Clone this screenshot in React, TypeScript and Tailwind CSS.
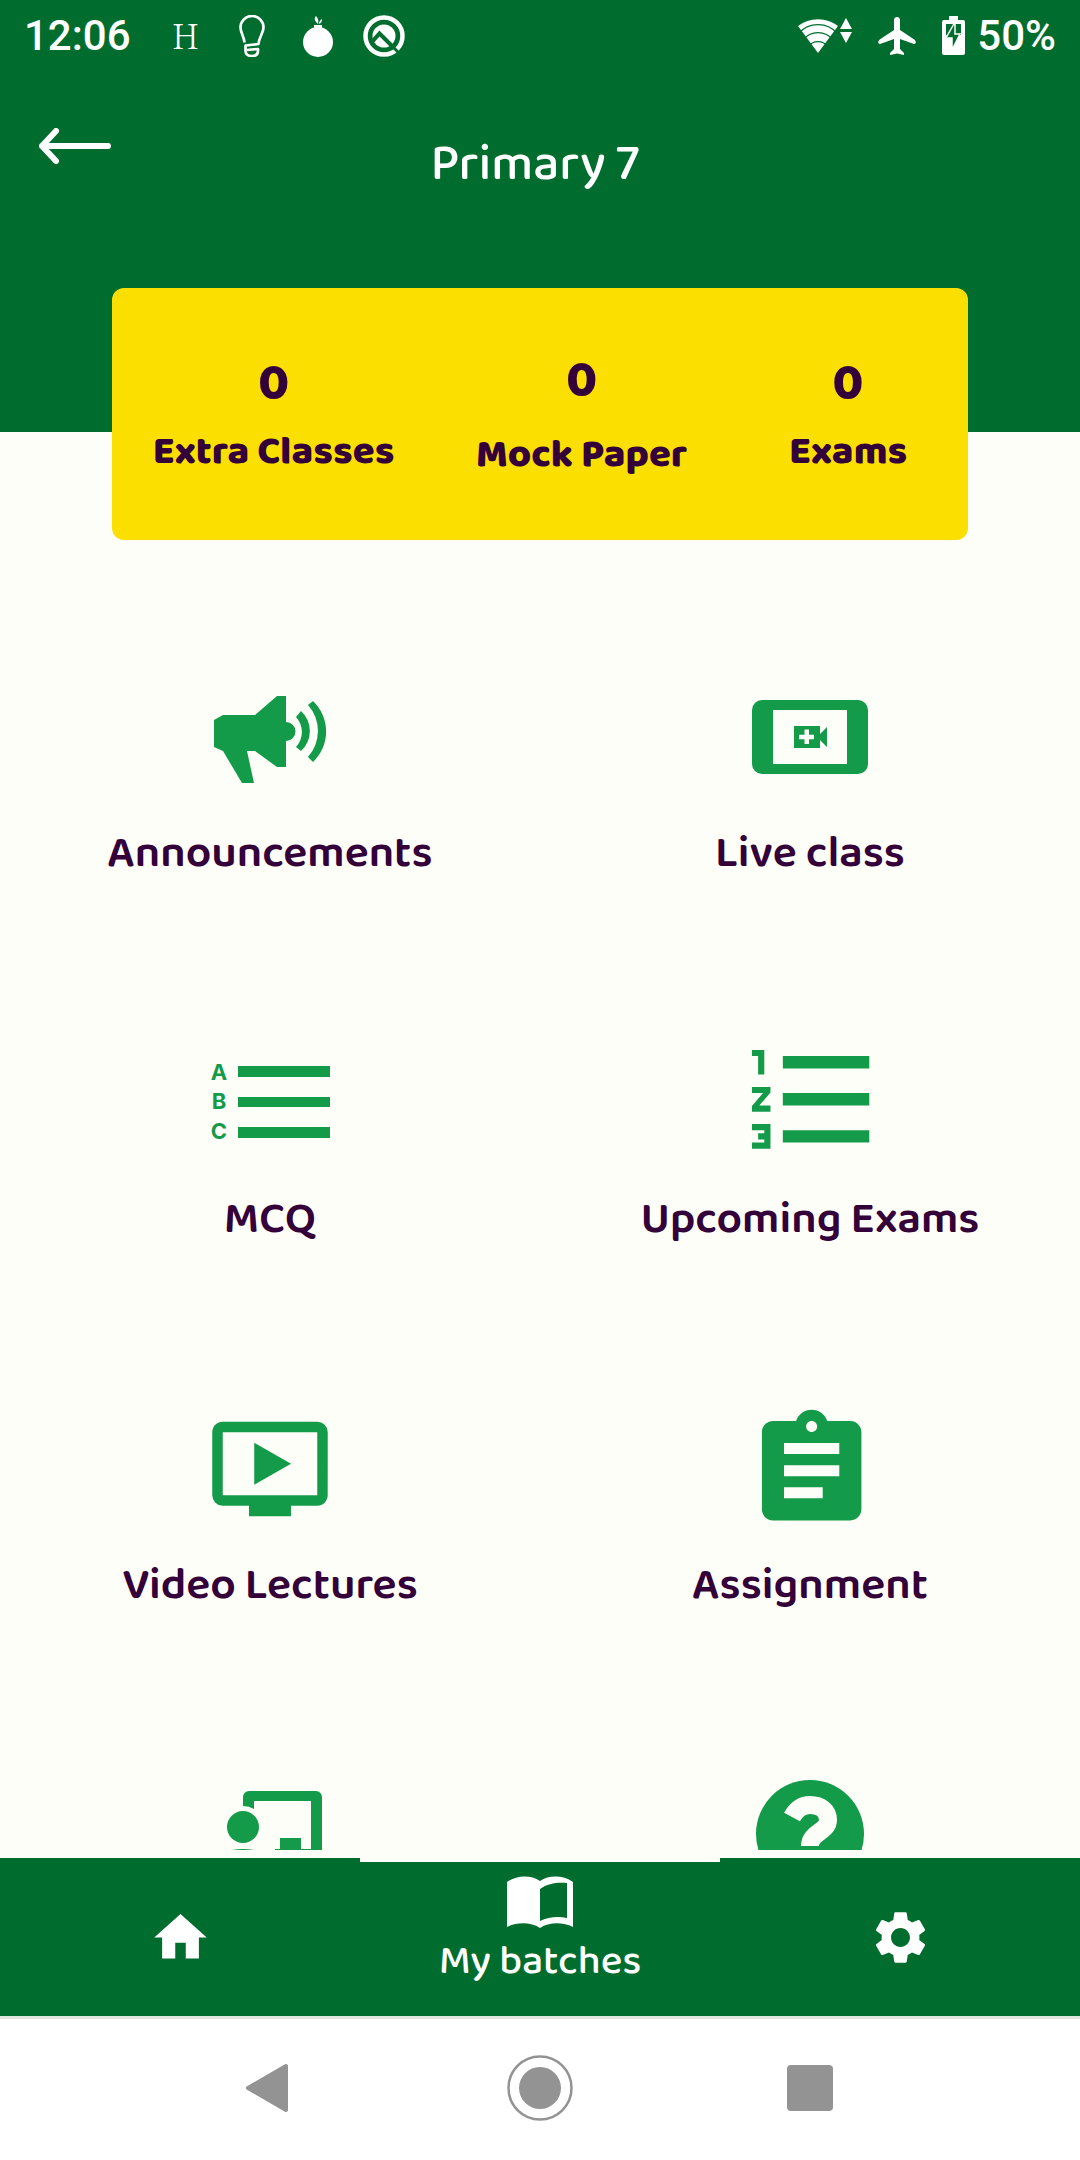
import type { ReactNode } from "react"
import { MdAssignment, MdFormatListNumbered, MdHome, MdOndemandVideo, MdSettings } from "react-icons/md"

interface Stat {
    label: string
    value: number
    className: string
}

interface MenuItem {
    id: string
    label?: string
    icon: ReactNode
}

const stats: Stat[] = [
    { label: "Extra Classes", value: 0, className: "" },
    { label: "Mock Paper", value: 0, className: "gap-1.5" },
    { label: "Exams", value: 0, className: "px-5" },
]

function MegaphoneIcon() {
    return (
        <svg viewBox="0 0 126 126" className="size-full" fill="currentColor" aria-hidden="true">
            <path d="M7 46L16 41H48L70 22H79V48A9.500 9.500 0 0 1 79 67V93H70L48 77H40L47 109H35L16 77L7 73Z" />
            <path d="M89 43L94 37A27 27 0 0 1 94 77L89 73A22 22 0 0 0 89 43Z" />
            <path d="M101 31L106 27A42 42 0 0 1 106 88L101 83A39 39 0 0 0 101 31Z" />
        </svg>
    )
}

function LiveClassIcon() {
    return (
        <svg viewBox="0 0 126 126" className="size-full" fill="currentColor" fillRule="evenodd" aria-hidden="true">
            <path d="M15 26H111A10 10 0 0 1 121 36V90A10 10 0 0 1 111 100H15A10 10 0 0 1 5 90V36A10 10 0 0 1 15 26ZM26 36V90H100V36Z" />
            <path d="M47 52H73V60L80 53V73L73 66V74H47ZM57.500 55.500V60.700H52V65.300H57.500V70H62V65.300H67V60.700H62V55.500Z" />
        </svg>
    )
}

function McqIcon() {
    return (
        <svg viewBox="0 0 126 126" className="size-full" fill="currentColor" aria-hidden="true">
            <path d="M31 26H123V37H31ZM31 57H123V67H31ZM31 87H123V98H31Z" />
            <g fontFamily="Inter, sans-serif" fontWeight="700" fontSize="22" textAnchor="middle">
                <text x="12" y="40">A</text>
                <text x="12" y="69">B</text>
                <text x="12" y="99">C</text>
            </g>
        </svg>
    )
}

function TeacherIcon() {
    return (
        <svg viewBox="0 0 126 126" className="size-full" fill="currentColor" aria-hidden="true">
            <path d="M36 34V25A6 6 0 0 1 42 19H109A6 6 0 0 1 115 25V81A6 6 0 0 1 109 87H68V77H73V66H94V77H104V29H47V37A22 22 0 0 0 36 34Z" />
            <circle cx="36" cy="55" r="16" />
            <path d="M4 97C4 84 18 77 36 77C54 77 68 84 68 97V104H4Z" />
        </svg>
    )
}

function QuestionIcon() {
    return (
        <svg viewBox="0 0 126 126" className="size-full" aria-hidden="true">
            <circle cx="63" cy="62" r="54" fill="currentColor" />
            <path d="M45 45C50 36 56 33 63 33C74 33 81 39 81 48C81 60 63 60 63 74" fill="none" stroke="#fdfef7" strokeWidth="18" />
            <circle cx="63" cy="91" r="9" fill="#fdfef7" />
        </svg>
    )
}

function BookIcon() {
    return (
        <svg viewBox="0 0 66 52" className="h-[52px] w-[66px]" fill="currentColor" fillRule="evenodd" aria-hidden="true">
            <path d="M0 6C10 -1 24 -1 33 5C42 -1 56 -1 66 6V51C56 46 42 46 33 52C24 46 10 46 0 51ZM33 13V45C41 41 51 40 60 42V7C51 6 41 7 33 13Z" />
        </svg>
    )
}

function StatusBar() {
    return (
        <div className="flex h-[72px] items-center justify-between px-6 font-[Roboto,sans-serif] text-[42px] font-medium text-white">
            <div className="flex items-center gap-6">
                <span className="mr-[10px] leading-none">12:06</span>
                <span className="w-[42px] text-center font-['Noto_Serif','Liberation_Serif',serif] text-[34px] font-light">H</span>
                <svg viewBox="0 0 42 42" className="size-[42px]" fill="none" stroke="currentColor" strokeWidth="2.700" strokeLinejoin="round" aria-hidden="true">
                    <path d="M13.500 27.500C13 21 9.500 18 9.500 12.500A11.500 11.500 0 0 1 32.500 12.500C32.500 18 28 22 27.500 29L14.500 30.500V36C14.500 39 17 41 21 41C25 41 27 39 27 36V34L16 35" />
                </svg>
                <svg viewBox="0 0 42 42" className="size-[42px]" fill="currentColor" aria-hidden="true">
                    <circle cx="21" cy="27" r="15" />
                    <path d="M17 10H25V14H17ZM19 1C16 4 19 7 21 9C22 6 21 3 19 1ZM25 4C23 5 22 7 22 9C24 8 25 7 25 4Z" />
                </svg>
                <svg viewBox="0 0 42 42" className="size-[42px]" fill="none" aria-hidden="true">
                    <circle cx="21" cy="21" r="18.500" stroke="currentColor" strokeWidth="4.500" />
                    <circle cx="21" cy="21" r="11.500" fill="currentColor" />
                    <path d="M9 27L16.500 18.500L31 33" stroke="#006d2f" strokeWidth="4" />
                    <path d="M29 31L38 40" stroke="#006d2f" strokeWidth="3" />
                </svg>
            </div>
            <div className="flex items-center gap-[26px]">
                <svg viewBox="0 0 54 38" className="h-[38px] w-[54px]" aria-hidden="true">
                    <path d="M0 9A33 33 0 0 1 40 9L20 36Z" fill="currentColor" />
                    <path d="M0 17A26 26 0 0 1 40 17M5 23A19 19 0 0 1 35 23M10 30A12 12 0 0 1 30 30" fill="none" stroke="#006d2f" strokeWidth="1.300" />
                    <path d="M42 12L48 1L54 12ZM42 15H54L48 26Z" fill="currentColor" />
                </svg>
                <svg viewBox="0 0 38 38" className="size-[38px]" fill="currentColor" aria-hidden="true">
                    <path d="M19 0C20.500 0 22 1 22 3V13L37 23Q39 27 36 27L22 22V32L26 36V38L19 36.500L12 38V36L16 32V22L2 27Q-1 27 1 23L16 13V3C16 1 17.500 0 19 0Z" />
                </svg>
                <span className="flex items-center gap-3">
                    <svg viewBox="0 0 23 40" className="h-10 w-[23px]" aria-hidden="true">
                        <path d="M7 0H16V4H21A2 2 0 0 1 23 6V37A2 2 0 0 1 21 39H2A2 2 0 0 1 0 37V6A2 2 0 0 1 2 4H7Z" fill="currentColor" />
                        <path d="M4 8H19V19H4Z" fill="#006d2f" />
                        <path d="M13 6L4 22H10V34L18 18H13Z" fill="#006d2f" stroke="currentColor" strokeWidth="1.500" />
                    </svg>
                    <span className="leading-none">50%</span>
                </span>
            </div>
        </div>
    )
}

const menuItems: MenuItem[] = [
    { id: "announcements", label: "Announcements", icon: <MegaphoneIcon /> },
    { id: "live", label: "Live class", icon: <LiveClassIcon /> },
    { id: "mcq", label: "MCQ", icon: <McqIcon /> },
    { id: "exams", label: "Upcoming Exams", icon: <MdFormatListNumbered viewBox="1.200 2.400 20.400 20.400" className="size-full" /> },
    { id: "videos", label: "Video Lectures", icon: <MdOndemandVideo className="size-full" /> },
    { id: "assignment", label: "Assignment", icon: <MdAssignment viewBox="0.300 0.300 22.800 22.800" className="size-full" /> },
    { id: "tutor", icon: <TeacherIcon /> },
    { id: "help", icon: <QuestionIcon /> },
]

export default function App() {
    return (
        <div className="flex h-screen flex-col overflow-hidden bg-[#fdfef7] font-['Baloo_2','Noto_Sans',sans-serif] text-[#34003a]">
            <header className="shrink-0 bg-[#006d2f] pb-[208px] text-white">
                <StatusBar />
                <div className="mt-8 flex h-[120px] items-center px-9">
                    <button type="button" aria-label="Back" className="cursor-pointer pb-8">
                        <svg viewBox="0 0 78 40" className="h-10 w-[78px]" fill="none" stroke="currentColor" strokeWidth="6" strokeLinecap="round" strokeLinejoin="round" aria-hidden="true">
                            <path d="M72 18H6M20 3L6 18L20 33" />
                        </svg>
                    </button>
                    <h1 className="flex-1 pt-[2px] pr-[88px] text-center text-[51px] leading-[60px] font-medium">Primary 7</h1>
                </div>
            </header>

            <section className="relative mx-28 -mt-36 flex h-[252px] shrink-0 items-center justify-around rounded-xl bg-[#fadf00] pt-2">
                {stats.map((stat) => (
                    <div key={stat.label} className={`flex flex-col text-center font-extrabold ${stat.className}`}>
                        <p className="text-[51px] leading-[68px]">{stat.value}</p>
                        <p className="text-[40px] leading-[68px]">{stat.label}</p>
                    </div>
                ))}
            </section>

            <main className="mb-2 min-h-0 flex-1 overflow-y-auto pt-[134px] [scrollbar-width:none]">
                <div className="grid grid-cols-2 gap-y-[156px]">
                    {menuItems.map((item) => (
                        <button key={item.id} type="button" aria-label={item.label ?? item.id} className="flex cursor-pointer flex-col items-center gap-6">
                            <span className="size-[126px] text-[#149b49]">{item.icon}</span>
                            {item.label && <span className="text-[45px] leading-[60px] font-semibold">{item.label}</span>}
                        </button>
                    ))}
                </div>
            </main>

            <nav className="grid h-[158px] shrink-0 grid-cols-3 bg-[#006d2f] text-white">
                <a href="#home" aria-label="Home" className="flex items-center justify-center">
                    <MdHome className="size-[63px]" />
                </a>
                <a href="#batches" className="flex flex-col items-center justify-center gap-[10px] border-t-4 border-[#fdfef7] pb-4">
                    <BookIcon />
                    <span className="text-[41px] leading-[48px] font-medium">My batches</span>
                </a>
                <a href="#settings" aria-label="Settings" className="flex items-center justify-center">
                    <MdSettings className="size-[63px]" />
                </a>
            </nav>

            {/* Android navigation keys */}
            <div className="flex h-36 shrink-0 items-center justify-around border-t-[3px] border-[#dfe6df] bg-white px-[135px] pb-1 text-[#939393]">
                <button type="button" aria-label="System back" className="cursor-pointer">
                    <svg viewBox="0 0 66 66" className="size-[66px]" fill="currentColor" stroke="currentColor" strokeWidth="4" strokeLinejoin="round" aria-hidden="true">
                        <path d="M11 33L49 11V55Z" />
                    </svg>
                </button>
                <button type="button" aria-label="System home" className="cursor-pointer">
                    <svg viewBox="0 0 66 66" className="size-[66px]" aria-hidden="true">
                        <circle cx="33" cy="33" r="31.500" fill="none" stroke="currentColor" strokeWidth="2.500" />
                        <circle cx="33" cy="33" r="21" fill="currentColor" />
                    </svg>
                </button>
                <button type="button" aria-label="Recent apps" className="cursor-pointer">
                    <svg viewBox="0 0 66 66" className="size-[66px]" fill="currentColor" aria-hidden="true">
                        <rect x="10" y="10" width="46" height="46" rx="4" />
                    </svg>
                </button>
            </div>
        </div>
    )
}
